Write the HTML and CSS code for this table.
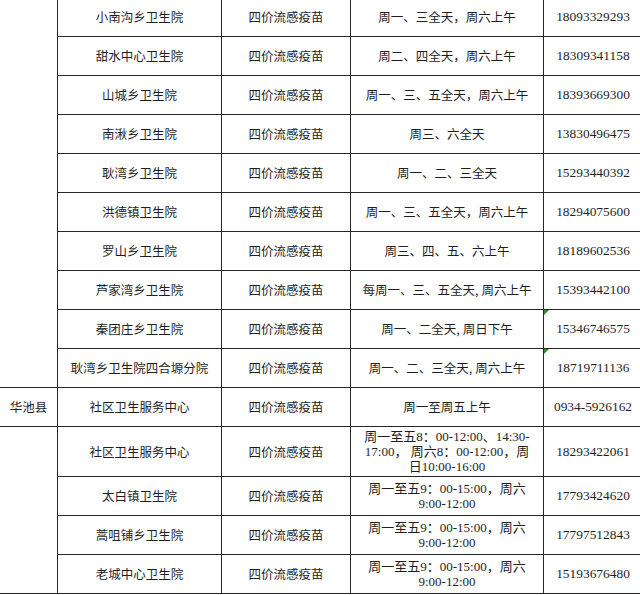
FILE: index.html
```html
<!DOCTYPE html>
<html lang="zh-CN">
<head>
<meta charset="utf-8">
<title>流感疫苗接种点</title>
<link rel="stylesheet" href="styles.css">
</head>
<body>
<div class="page">
<table class="sheet">
<colgroup>
<col class="c-county"><col class="c-site"><col class="c-vac"><col class="c-time"><col class="c-phone">
</colgroup>
<tbody>
<tr><td class="county" rowspan="10"></td><td>小南沟乡卫生院</td><td>四价流感疫苗</td><td>周一、三全天，周六上午</td><td class="phone">18093329293</td></tr>
<tr><td>甜水中心卫生院</td><td>四价流感疫苗</td><td>周二、四全天，周六上午</td><td class="phone">18309341158</td></tr>
<tr><td>山城乡卫生院</td><td>四价流感疫苗</td><td>周一、三、五全天，周六上午</td><td class="phone">18393669300</td></tr>
<tr><td>南湫乡卫生院</td><td>四价流感疫苗</td><td>周三、六全天</td><td class="phone">13830496475</td></tr>
<tr><td>耿湾乡卫生院</td><td>四价流感疫苗</td><td>周一、二、三全天</td><td class="phone">15293440392</td></tr>
<tr><td>洪德镇卫生院</td><td>四价流感疫苗</td><td>周一、三、五全天，周六上午</td><td class="phone">18294075600</td></tr>
<tr><td>罗山乡卫生院</td><td>四价流感疫苗</td><td>周三、四、五、六上午</td><td class="phone">18189602536</td></tr>
<tr><td>芦家湾乡卫生院</td><td>四价流感疫苗</td><td>每周一、三、五全天, 周六上午</td><td class="phone">15393442100</td></tr>
<tr><td>秦团庄乡卫生院</td><td>四价流感疫苗</td><td>周一、二全天, 周日下午</td><td class="phone flag">15346746575</td></tr>
<tr><td>耿湾乡卫生院四合塬分院</td><td>四价流感疫苗</td><td>周一、二、三全天, 周六上午</td><td class="phone flag">18719711136</td></tr>
<tr><td class="county">华池县</td><td>社区卫生服务中心</td><td>四价流感疫苗</td><td>周一至周五上午</td><td class="phone">0934-5926162</td></tr>
<tr class="tall"><td class="county" rowspan="4"></td><td>社区卫生服务中心</td><td>四价流感疫苗</td><td class="multi">周一至五8：00-12:00、14:30-<br>17:00，&nbsp;周六8：00-12:00，周<br>日10:00-16:00</td><td class="phone">18293422061</td></tr>
<tr><td>太白镇卫生院</td><td>四价流感疫苗</td><td class="multi">周一至五9：00-15:00，周六<br>9:00-12:00</td><td class="phone">17793424620</td></tr>
<tr><td>蒿咀铺乡卫生院</td><td>四价流感疫苗</td><td class="multi">周一至五9：00-15:00，周六<br>9:00-12:00</td><td class="phone">17797512843</td></tr>
<tr><td>老城中心卫生院</td><td>四价流感疫苗</td><td class="multi">周一至五9：00-15:00，周六<br>9:00-12:00</td><td class="phone">15193676480</td></tr>
</tbody>
</table>
</div>
</body>
</html>
```
FILE: styles.css
```css
html, body {
  margin: 0;
  padding: 0;
  background: #ffffff;
}

.page {
  width: 640px;
  height: 595px;
  overflow: hidden;
}

.sheet {
  border-collapse: collapse;
  table-layout: fixed;
  width: 643px;
  margin: -3px 0 0 -1px;
  font-family: "Liberation Serif", "Noto Sans CJK SC", serif;
  font-size: 12.5px;
  line-height: 15.3px;
  color: #1e1e1e;
}

.c-county { width: 58px; }
.c-site { width: 164px; }
.c-vac { width: 129px; }
.c-time { width: 193px; }
.c-phone { width: 99px; }

.sheet td {
  border: 1px solid #262626;
  height: 38px;
  padding: 0 2px;
  text-align: center;
  vertical-align: middle;
  font-family: "Noto Sans CJK SC", sans-serif;
}

.sheet tr.tall td {
  height: 49px;
}

.sheet td.multi {
  font-family: "Liberation Serif", "Noto Sans CJK SC", serif;
  font-size: 13px;
  line-height: 15.3px;
}

.sheet td.phone {
  font-family: "Liberation Serif", serif;
  font-size: 13.4px;
  position: relative;
}

.sheet td.flag::before {
  content: "";
  position: absolute;
  left: 0;
  top: 0;
  border-top: 5px solid #2f8a2f;
  border-right: 5px solid transparent;
}
```
